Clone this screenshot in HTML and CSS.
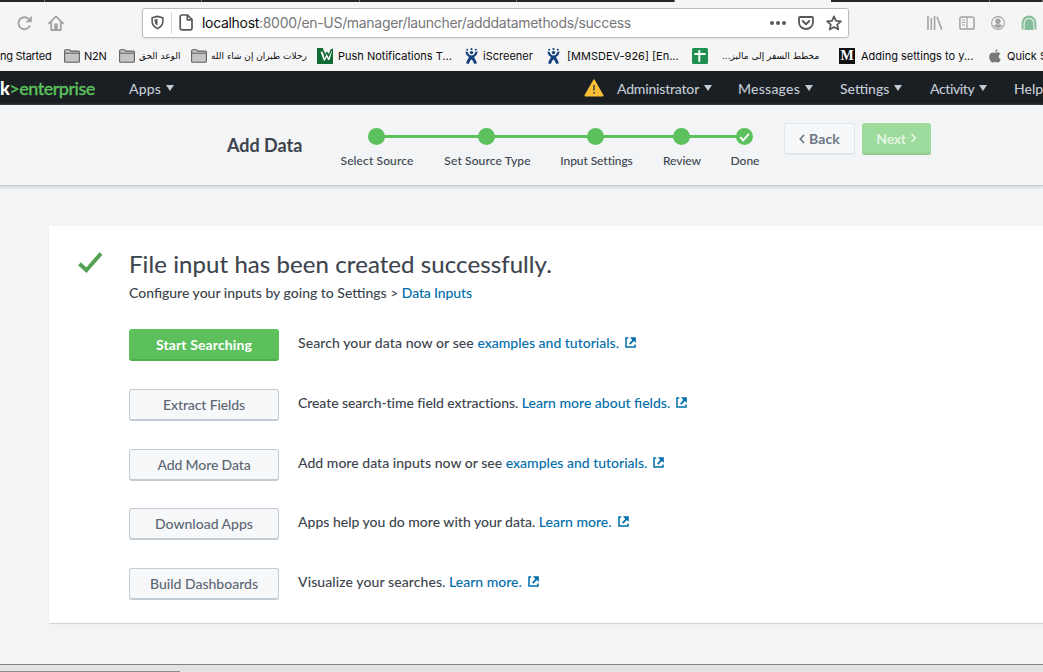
FILE: index.html
```html
<!DOCTYPE html>
<html lang="en">
<head>
<meta charset="utf-8">
<title>Add Data</title>
<link rel="stylesheet" href="styles.css">
</head>
<body>
<svg class="defs" aria-hidden="true">
  <symbol id="folder" viewBox="0 0 16 14"><path d="M.6 12.200V1.700q0-1 1-1h3.600q.7 0 1.100.6l.5.800h7.600q1 0 1 1v9.100q0 1-1 1H1.600q-1 0-1-1z" fill="#c4c4c4" stroke="#606060" stroke-width="1.100"/><path d="M.8 4.200h14.400" stroke="#606060"/></symbol>
  <symbol id="jira" viewBox="0 0 13 16"><g fill="#15427a"><circle cx="2.200" cy="1.800" r="1"/><circle cx="6.500" cy="1.100" r="1.100"/><circle cx="10.800" cy="1.800" r="1"/><circle cx="6.500" cy="4.600" r="1.700"/><path d="M.2 3.600l2.500.3q1.200 3.500 3.800 3.500t3.800-3.500l2.500-.3Q12.300 7 9 9.200q1.800 2.600 3 6l-2.700.7Q8.300 13 6.500 11.200 4.700 13 3.700 15.900L1 15.200q1.200-3.400 3-6Q.7 7 .2 3.600z"/></g></symbol>
  <symbol id="ext" viewBox="0 0 11 11"><path d="M3.200 1H1v9h9V7.500" fill="none" stroke="currentColor" stroke-width="1.500"/><path d="M5 .2h5.800V6L8.900 4.100 5.300 7.700 4 6.400l3.300-3.500z" fill="currentColor"/></symbol>
</svg>
<div class="tabs"><i></i><i></i><i></i><i></i><i></i><i class="active"></i><i></i><i></i></div>
<div class="toolbar">
  <svg class="reload" width="17" height="16" viewBox="0 0 17 16"><path d="M13.200 4.500A6 6 0 1 0 14 10.500" fill="none" stroke="#a3a3a5" stroke-width="1.900"/><path d="M15.800 .8v6.400H9.400z" fill="#a3a3a5"/></svg>
  <svg class="home" width="16" height="16" viewBox="0 0 16 16"><path d="M1 8.400L8 1.400l7 7M3.200 7.500v7.500h9.600V7.500" fill="none" stroke="#a3a3a5" stroke-width="1.800" stroke-linejoin="round" stroke-linecap="round"/><path d="M6.200 8.500h3.600V14H6.200z" fill="#a3a3a5"/></svg>
  <div class="url">
    <svg width="13" height="15" viewBox="0 0 14 15"><path d="M7 .9l5.800 1.500v3.800q0 5-5.800 7.900-5.800-2.900-5.800-7.900V2.400z" fill="none" stroke="#58585c" stroke-width="1.700" stroke-linejoin="round"/><path d="M7 3.600v7.500q-3.300-2-3.300-5.400V4.300z" fill="#58585c"/></svg>
    <span class="bar"></span>
    <svg width="14" height="17" viewBox="0 0 14 17"><path d="M3 1h5.500L13 5.500V14q0 1.800-1.800 1.800H3Q1.200 15.800 1.200 14V2.800Q1.200 1 3 1zM8.300 1.300v4.500h4.400" fill="none" stroke="#58585c" stroke-width="1.700" stroke-linejoin="round"/></svg>
    <span class="addr"><b>localhost</b>:8000/en-US/manager/launcher/adddatamethods/success</span>
    <svg class="dots" width="16" height="4" viewBox="0 0 16 4" fill="#58585c"><circle cx="2" cy="2" r="2"/><circle cx="8" cy="2" r="2"/><circle cx="14" cy="2" r="2"/></svg>
    <svg class="pocket" width="16" height="14" viewBox="0 0 16 14"><path d="M2 1h12q1 0 1 1v4.200a7 6.800 0 0 1-14 0V2q0-1 1-1z" fill="none" stroke="#58585c" stroke-width="1.800"/><path d="M4.700 5L8 8.200 11.300 5" fill="none" stroke="#58585c" stroke-width="1.900" stroke-linecap="round" stroke-linejoin="round"/></svg>
    <svg class="star" width="16" height="16" viewBox="0 0 16 16"><path d="M8 1.300l2 4.500 4.900.5-3.700 3.300 1.100 4.900L8 12l-4.300 2.500 1.100-4.900L1.100 6.300 6 5.800z" fill="none" stroke="#58585c" stroke-width="1.700" stroke-linejoin="round"/></svg>
  </div>
  <div class="tools">
    <svg width="16" height="14" viewBox="0 0 16 14"><path d="M1 0v14M4.300 2v12M7.600 0v14M10 .8L14.800 13.600" fill="none" stroke="#a3a3a5" stroke-width="1.600"/></svg>
    <svg width="16" height="14" viewBox="0 0 16 14"><rect x=".9" y=".9" width="14.200" height="12.200" rx="1.800" fill="none" stroke="#a3a3a5" stroke-width="1.500"/><path d="M8 1v12M3 4h3M3 6.500h3M3 9h3" stroke="#a3a3a5" stroke-width="1.200"/></svg>
    <svg width="14" height="14" viewBox="0 0 14 14"><circle cx="7" cy="7" r="6.400" fill="none" stroke="#a3a3a5" stroke-width="1.100"/><circle cx="7" cy="5.200" r="2.700" fill="#a3a3a5"/><path d="M2.500 9q4.500-1.400 9 0-1.400 3-4.500 3T2.500 9z" fill="#a3a3a5"/></svg>
    <svg width="16" height="15" viewBox="0 0 16 15"><path d="M3.500 15V8.500a4.500 4.500 0 0 1 9 0V15z" fill="#85bd9b"/><path d="M1.700 14.500V8a6.300 6.300 0 0 1 12.600 0v6.500" fill="none" stroke="#85bd9b" stroke-width="2.200"/><path d="M3 15V8.500a5 5 0 0 1 10 0V15" fill="none" stroke="#d7ebdf" stroke-width=".7"/></svg>
  </div>
</div>
<div class="bookmarks">
  <span><em class="ls-start">ng Started</em></span>
  <span><svg width="16" height="14"><use href="#folder"/></svg><em class="n2n">N2N</em></span>
  <span><svg width="16" height="14"><use href="#folder"/></svg><em class="ar" dir="rtl">الوعد الحق</em></span>
  <span><svg width="16" height="14"><use href="#folder"/></svg><em class="ar" dir="rtl">رحلات طيران إن شاء الله</em></span>
  <span class="wave"><svg width="16" height="16" viewBox="0 0 16 16"><path d="M0 0h6l.5 2.500Q8.500 4 8 6l2-2.500L12 6l1.500-4.500L16 .5V16H0z" fill="#126b35"/><path d="M3.500 3.500Q6 3 6.500 6l1 4.500 2.200-4.800 1.800 4L15.500 1.500 12.500 12h-1.300L9.500 9 8 12.500H6.700z" fill="#fff"/></svg><em>Push Notifications T...</em></span>
  <span class="j"><svg width="13" height="16"><use href="#jira"/></svg><em>iScreener</em></span>
  <span class="j j2"><svg width="13" height="16"><use href="#jira"/></svg><em>[MMSDEV-926] [En...</em></span>
  <span class="sheet"><svg width="16" height="16" viewBox="0 0 16 16"><rect width="16" height="16" rx="1.500" fill="#1e9150"/><path d="M2.300 6h11.400M7.300 2.300v11.400" stroke="#fff" stroke-width="2"/></svg><em class="ar" dir="rtl">مخطط السفر إلى ماليز...</em></span>
  <span class="med"><i class="m">M</i><em>Adding settings to y...</em></span>
  <span class="apple"><svg width="12" height="14" viewBox="0 0 12 14"><path d="M8.600 0q.1 2.500-2.600 3.400Q6 1 8.600 0zM6 4q1.200-.6 2.500-.7 1.700 0 2.800 1.400Q9.700 5.700 9.700 7.500q0 2 2 2.900-1.200 3.200-2.900 3.200L6.200 13l-2.400.6Q1.600 13.300.4 9.500-.4 5.500 2 4 3.600 3 6 4z" fill="#77777a"/></svg><em>Quick S</em></span>
</div>
<nav class="nav">
  <div class="brand"><b>k</b><span>&gt;enterprise</span></div>
  <a class="n1"><em>Apps</em><i></i></a>
  <svg class="warn" width="20" height="18" viewBox="0 0 20 18"><path d="M10 1.200L18.800 16.600H1.200z" fill="#f8be34" stroke="#f8be34" stroke-width="1.600" stroke-linejoin="round"/><path d="M10 6v5.500M10 13v1.700" stroke="#3c444d" stroke-width="1.500"/></svg>
  <a class="n2"><em>Administrator</em><i></i></a>
  <a class="n3"><em>Messages</em><i></i></a>
  <a class="n4"><em>Settings</em><i></i></a>
  <a class="n5"><em>Activity</em><i></i></a>
  <a class="n6"><em>Help</em></a>
</nav>
<header class="wizard">
  <h1>Add Data</h1>
  <ol class="steps">
    <li><i></i><em class="p12">Select Source</em></li>
    <li><i></i><em class="p12">Set Source Type</em></li>
    <li><i></i><em class="m08">Input Settings</em></li>
    <li><i></i><em class="m05">Review</em></li>
    <li><i><svg width="17" height="17" viewBox="0 0 17 17"><path d="M4.200 9.200l3 3.200L12.900 5.800" fill="none" stroke="#fff" stroke-width="1.800"/></svg></i><em>Done</em></li>
  </ol>
  <div class="pager">
    <button class="btn back"><svg width="6" height="10" viewBox="0 0 6 10"><path d="M5 1L1.300 5 5 9" fill="none" stroke="currentColor" stroke-width="1.700"/></svg><em class="p12">Back</em></button>
    <button class="btn next"><em class="m37">Next</em><svg width="7" height="10" viewBox="0 0 6 10"><path d="M1 1l3.700 4L1 9" fill="none" stroke="currentColor" stroke-width="1.700"/></svg></button>
  </div>
</header>
<main class="page">
  <section class="card">
    <svg class="ok" width="25" height="22" viewBox="0 0 25 22"><path d="M1.500 11.800l6.900 6.400L23 1.500" fill="none" stroke="#53a051" stroke-width="3.900"/></svg>
    <div class="body">
      <h2>File input has been created successfully.</h2>
      <p class="sub"><em>Configure your inputs by going to Settings &gt;</em> <a class="m14">Data Inputs</a></p>
      <div class="row"><button class="act primary"><em class="p12">Start Searching</em></button><p><em class="p10">Search your data now or see</em> <a><em>examples and tutorials.</em><svg width="11" height="11"><use href="#ext"/></svg></a></p></div>
      <div class="row"><button class="act"><em class="m11">Extract Fields</em></button><p><em class="m08">Create search-time field extractions.</em> <a><em>Learn more about fields.</em><svg width="11" height="11"><use href="#ext"/></svg></a></p></div>
      <div class="row"><button class="act"><em class="m11">Add More Data</em></button><p><em class="p03">Add more data inputs now or see</em> <a><em>examples and tutorials.</em><svg width="11" height="11"><use href="#ext"/></svg></a></p></div>
      <div class="row"><button class="act"><em>Download Apps</em></button><p><em>Apps help you do more with your data.</em> <a><em>Learn more.</em><svg width="11" height="11"><use href="#ext"/></svg></a></p></div>
      <div class="row"><button class="act"><em>Build Dashboards</em></button><p><em class="p10">Visualize your searches.</em> <a><em>Learn more.</em><svg width="11" height="11"><use href="#ext"/></svg></a></p></div>
    </div>
  </section>
</main>
<div class="dock"><i></i></div>
</body>
</html>
```
FILE: styles.css
```css
* { box-sizing: border-box; }
html { overflow: hidden; }
body { margin: 0; width: 1043px; height: 672px; overflow: hidden; display: flex; flex-direction: column; background: #f2f4f5; font-family: Lato, "Liberation Sans", sans-serif; color: #3c444d; }
em { font-style: normal; white-space: nowrap; }
em, a, span { flex: none; }
svg { flex: none; display: block; }
.defs { position: absolute; width: 0; height: 0; }

/* letter-spacing adjustments */
.p12 { letter-spacing: .12px; }
.p10 { letter-spacing: .09px; }
.p03 { letter-spacing: .03px; }
.m05 { letter-spacing: -.05px; }
.m08 { letter-spacing: -.07px; }
.m11 { letter-spacing: -.12px; }
.m14 { letter-spacing: -.14px; }
.m37 { letter-spacing: -.3px; }

/* browser chrome */
.tabs { display: grid; grid-template-columns: 45px 157px 158px 157px 158px 156px 159px 53px; height: 2px; background: #292524; flex: none; }
.tabs i { border-right: 1px solid #777; }
.tabs .active { background: #f5f6f7; border: 0; }
.toolbar { height: 41px; flex: none; display: flex; align-items: center; background: #f5f5f6; padding-left: 16px; }
.reload { margin-right: 15px; }
.home { margin-right: 78px; }
.url { width: 707px; height: 30px; border: 1px solid #bcbcbe; border-radius: 3px; background: #fff; display: flex; align-items: center; padding-left: 8px; box-shadow: 0 1px 3px #0001; }
.bar { width: 1px; height: 22px; background: #d5d5d7; margin: 0 7px; }
.addr { margin-left: 9px; font: 14px/20px Inter, sans-serif; letter-spacing: -.31px; color: #77777a; white-space: nowrap; }
.addr b { font-weight: 400; color: #0c0c0d; }
.dots { margin-left: auto; }
.pocket { margin: 0 12px; }
.star { margin-right: 6px; }
.tools { display: flex; align-items: center; margin-left: 78px; gap: 16px; }
.bookmarks { height: 28px; flex: none; display: grid; grid-template-columns: 64px 55px 72px 126px 148px 82px 145px 147px 150px 54px; background: #f5f5f6; font: 11px Inter, sans-serif; color: #0c0c0d; }
.bookmarks span { display: flex; align-items: center; gap: 4px; height: 26px; }
.ls-start { letter-spacing: -.28px; }
.n2n { letter-spacing: -.2px; }
.bookmarks .j { gap: 5px; }
.bookmarks .j2 { gap: 7px; }
.bookmarks .wave { gap: 5px; }
.bookmarks .sheet { gap: 14px; }
.bookmarks .med { gap: 6px; }
.bookmarks .apple { gap: 6px; }
.ar { font-family: "DejaVu Sans", sans-serif; font-size: 9px; }
.m { width: 16px; height: 16px; background: #111; color: #fff; font: bold 14px/16px "Liberation Serif", serif; display: flex; justify-content: center; }

/* application bar */
.nav { height: 34px; flex: none; background: #1a1f24; color: #c3cbd4; display: flex; align-items: center; font-size: 14px; font-weight: 500; overflow: hidden; }
.nav a { display: flex; align-items: center; gap: 5px; }
.nav a i { border: 4px solid transparent; border-top: 6px solid #c3cbd4; border-bottom: 0; }
.brand { width: 129px; flex: none; font-size: 18px; color: #5cc05c; white-space: nowrap; font-weight: 500; letter-spacing: -.5px; }
.brand b { color: #fff; font-weight: 900; }
.brand span { -webkit-text-stroke: .3px #5cc05c; }
.n1 { width: 455px; letter-spacing: .15px; }
.warn { margin-right: 13px; }
.n2 { width: 121px; letter-spacing: -.2px; }
.n3 { width: 102px; letter-spacing: .24px; }
.n4 { width: 90px; }
.n5 { width: 84px; letter-spacing: -.4px; }
.n6 { width: 29px; }

/* wizard */
.wizard { height: 81px; flex: none; border-bottom: 1px solid #c3cbd4; box-shadow: 0 1px 3px #c3cbd4; display: flex; padding-left: 227px; background: #f2f4f5; }
h1 { margin: 0; width: 108px; font-size: 18px; line-height: 81px; font-weight: 700; }
.steps { list-style: none; margin: 0; padding: 23px 0 0; width: 449px; display: grid; grid-template-columns: 84px 137px 81px 90px 36px; font-size: 12px; font-weight: 500; height: 70px; background: linear-gradient(#5cc05c, #5cc05c) 41px 30px / 368px 3px no-repeat; }
.steps li { display: flex; flex-direction: column; align-items: center; gap: 8px; }
.steps i { width: 17px; height: 17px; border-radius: 50%; background: #5cc05c; margin-right: 2px; }
.pager { display: flex; gap: 7px; padding-top: 18px; }
.btn { height: 32px; font: 700 14px Lato, sans-serif; display: flex; align-items: center; justify-content: center; gap: 4px; border-radius: 3px; padding: 0; }
.back { width: 71px; color: #6b7785; background: #f7f8fa; border: 1px solid #e1e6eb; border-bottom-width: 2px; }
.next { width: 69px; color: #e4f5e4; background: #9ddb9d; border: 0; border-bottom: 2px solid #8fc98f; }

/* result card */
.page { flex: 1; padding: 40px 0 0 49px; }
.card { height: 397px; background: #fff; box-shadow: 0 1px 1px #0002; display: flex; padding: 26px 0 0 29px; }
.ok { margin-right: 26px; }
.body { height: 371px; overflow: hidden; }
h2 { margin: 0; font-size: 24px; font-weight: 400; line-height: 24px; letter-spacing: .08px; -webkit-text-stroke: .15px #3c444d; white-space: nowrap; }
.sub { margin: 7px 0 26px; }
p { font-size: 14px; line-height: 20px; font-weight: 500; margin: 0; white-space: nowrap; }
p a { color: #006eaa; }
p a svg { display: inline-block; margin-left: 6px; }
.row { display: flex; height: 59.8px; gap: 19px; }
.row p { padding-top: 4px; }
.act { width: 150px; height: 32px; border: 1px solid #c3cbd4; border-bottom-width: 2px; border-radius: 3px; background: #f7f8fa; color: #5c6773; font: 500 14px Lato, sans-serif; padding: 0; }
.primary { background: #5cc05c; border: 0; border-bottom: 2px solid #4fae4f; color: #fff; font-weight: 700; }
.dock { height: 8px; flex: none; border-top: 1px solid #828282; background: #e3e3e3; display: flex; align-items: flex-end; }
.dock i { width: 180px; height: 1px; background: #8d8d8d; }
```
